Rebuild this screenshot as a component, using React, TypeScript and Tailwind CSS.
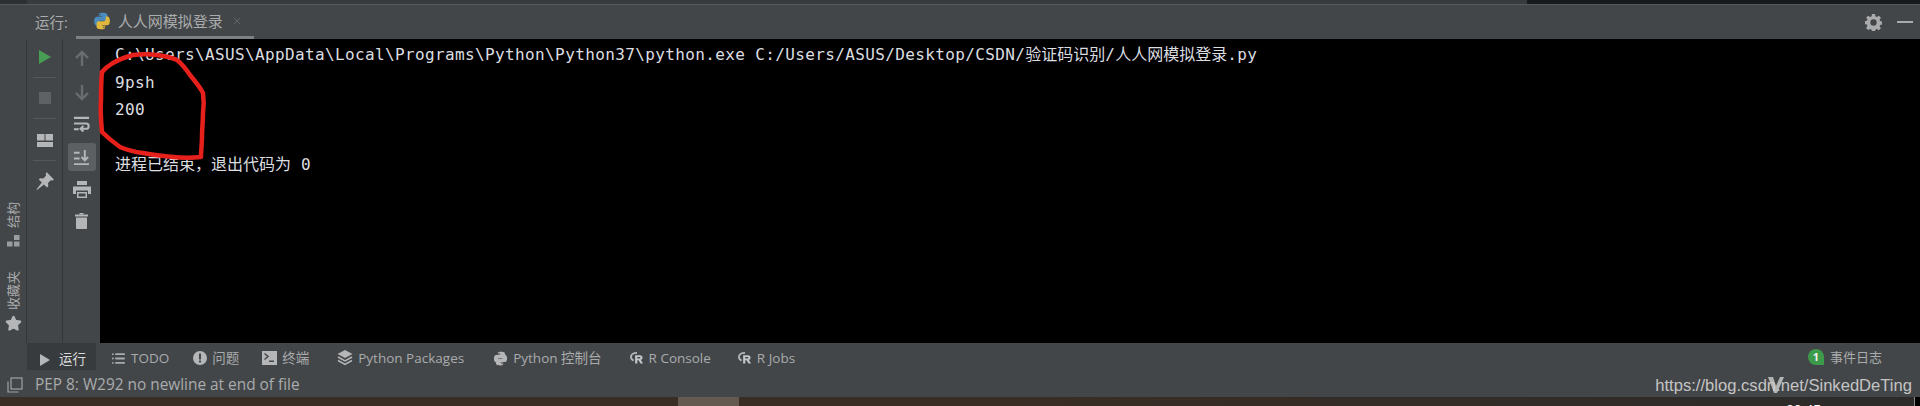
import { X, Star, List } from "lucide-react";

const mono = "font-['DejaVu_Sans_Mono','Noto_Sans_CJK_SC',monospace]";
const ui = "font-['Open_Sans','Noto_Sans_CJK_SC',sans-serif]";

function PythonLogo({ grey, size = 18 }: { grey?: boolean; size?: number }) {
  return (
    <svg width={size} height={size} viewBox="0 0 24 24" className="shrink-0">
      <path
        d="M11.900 1C7.500 1 7.800 3 7.800 3v2.600h4.300v.7H5.600S1.500 5.800 1.500 12.100c0 6.200 3.400 6 3.400 6H7v-3s-.1-3.400 3.400-3.400H16s3.200 0 3.200-3.100V4.100S19.900 1 11.900 1zM9.500 2.800a1 1 0 1 1 0 2 1 1 0 0 1 0-2z"
        fill={grey ? "#b4b6b8" : "#4b8bbe"}
      />
      <path
        d="M12.100 23c4.400 0 4.100-2 4.100-2v-2.600h-4.300v-.7h6.500s4.100.5 4.100-5.800c0-6.200-3.400-6-3.400-6h-2.100v3s.1 3.400-3.400 3.400H8s-3.200 0-3.200 3.100v4.500S4.100 23 12.100 23zm2.400-1.800a1 1 0 1 1 0-2 1 1 0 0 1 0 2z"
        fill={grey ? "#b4b6b8" : "#e0b83e"}
      />
    </svg>
  );
}

function RLogo() {
  return (
    <svg width="14" height="14" viewBox="0 0 15 14">
      <path d="M7.500 1.500C3.500 1.500 1 3.500 1 6c0 1.700 1.100 3 2.800 3.800" fill="none" stroke="#b4b6b8" strokeWidth="2" />
      <path d="M5.500 13V4h5c2 0 3 1 3 2.500S12.500 9 11.500 9l2.500 4h-2.700l-2.200-3.700H7.800V13zM7.800 5.800v1.800h2.400c.6 0 1-.4 1-.9s-.4-.9-1-.9z" fill="#c4c6c8" fillRule="evenodd" />
    </svg>
  );
}

function GearIcon() {
  return (
    <svg width="17" height="17" viewBox="0 0 16 16">
      <path
        fillRule="evenodd"
        fill="#a9abad"
        d="M6.600 0h2.800l.4 2.200 1.300.6L13 1.600 15 3.500l-1.300 1.900.5 1.300 2.300.4v2.800l-2.300.4-.5 1.300 1.300 1.900-2 1.900-1.900-1.200-1.300.6-.4 2.200H6.600l-.4-2.200-1.300-.6L3 15 1 13.100l1.300-1.900-.5-1.300L-.5 9.500V6.700l2.300-.4.5-1.300L1 3.500 3 1.600l1.900 1.200 1.300-.6zM8 5a3 3 0 1 0 0 6 3 3 0 0 0 0-6z"
      />
    </svg>
  );
}

function ArrowIcon({ down }: { down?: boolean }) {
  return (
    <svg width="14" height="16" viewBox="0 0 14 16" fill="none" stroke="#6a6d6f" strokeWidth="2.400" className={down ? "rotate-180" : ""}>
      <path d="M7 16V2M1 8l6-6 6 6" />
    </svg>
  );
}

function SoftWrapIcon() {
  return (
    <svg width="17" height="17" viewBox="0 0 18 18" fill="none" stroke="#b4b6b8" strokeWidth="2.200">
      <path d="M1 2h16M1 8h13c3.500 0 3.500 5.500 0 5.500H9" />
      <path d="M11 10.500 8 13.500l3 3" />
      <path d="M1 14h5" />
    </svg>
  );
}

function ScrollEndIcon() {
  return (
    <svg width="17" height="17" viewBox="0 0 18 18" fill="none" stroke="#b4b6b8" strokeWidth="2">
      <path d="M1 4h6M1 10h6M1 16h16" />
      <path d="M12.500 1v11M9 8.500l3.500 3.500L16 8.500" />
    </svg>
  );
}

function PrinterIcon() {
  return (
    <svg width="18" height="17" viewBox="0 0 18 17" fill="#b4b6b8">
      <rect x="4" y="0" width="10" height="4" />
      <path fillRule="evenodd" d="M0 5.500h18V13h-3V9.500H3V13H0z" />
      <path fillRule="evenodd" d="M4 11h10v6H4zM5.500 12.500v3h7v-3z" />
    </svg>
  );
}

function TrashIcon() {
  return (
    <svg width="13" height="16" viewBox="0 0 13 16" fill="#b4b6b8">
      <rect x="4.500" y="0" width="4" height="1.500" />
      <rect x="0" y="1.500" width="13" height="2" />
      <path d="M1 4.500h11V15a1 1 0 0 1-1 1H2a1 1 0 0 1-1-1z" />
    </svg>
  );
}

function PinIcon() {
  return (
    <svg width="18" height="18" viewBox="0 0 18 18" fill="#b4b6b8">
      <path d="M10.500 0 18 7.500l-2 1.200-1-.7-3 3 .3 3.300-1.300 1.200-3-3L1 18l-.5-.5 5.300-7-3-3L4 6.200l3.300.3 3-3-.7-1z" />
    </svg>
  );
}

function LayoutIcon() {
  return (
    <svg width="16" height="13" viewBox="0 0 16 13" fill="#b4b6b8">
      <rect x="0" y="0" width="7.500" height="6.500" />
      <rect x="8.500" y="0" width="7.500" height="6.500" />
      <rect x="0" y="8" width="16" height="5" />
    </svg>
  );
}

function StructureIcon() {
  return (
    <svg width="13" height="12" viewBox="0 0 13 12" fill="#9a9c9e">
      <rect x="7" y="0" width="5.500" height="5" />
      <rect x="0" y="6.500" width="5.500" height="5" />
      <rect x="7" y="6.500" width="5.500" height="5" />
    </svg>
  );
}

function ProblemIcon() {
  return (
    <svg width="14" height="14" viewBox="0 0 14 14">
      <circle cx="7" cy="7" r="7" fill="#b4b6b8" />
      <rect x="6" y="2.500" width="2" height="6" fill="#45494a" />
      <rect x="6" y="9.500" width="2" height="2" fill="#45494a" />
    </svg>
  );
}

function TerminalIcon() {
  return (
    <svg width="15" height="14" viewBox="0 0 15 14">
      <rect width="15" height="14" fill="#b4b6b8" />
      <path d="M2.500 2.500 6 5.500l-3.500 3" fill="none" stroke="#45494a" strokeWidth="1.500" />
      <rect x="7" y="9.500" width="5" height="1.500" fill="#45494a" />
    </svg>
  );
}

function LayersIcon() {
  return (
    <svg width="16" height="16" viewBox="0 0 16 16">
      <path d="M8 0l7.500 4L8 8 .5 4z" fill="#b4b6b8" />
      <path d="M1 7l7 3.800L15 7M1 10.500l7 3.800 7-3.800" fill="none" stroke="#b4b6b8" strokeWidth="1.500" />
    </svg>
  );
}

function EventBadge() {
  return (
    <svg width="17" height="17" viewBox="0 0 17 17">
      <path d="M8 0a8 8 0 0 1 8 8v8H8A8 8 0 0 1 8 0z" fill="#3c9a4b" />
      <text x="8" y="12" textAnchor="middle" fontSize="11" fontWeight="700" fill="#f0f0f0" fontFamily="Open Sans">1</text>
    </svg>
  );
}

function CopyIcon() {
  return (
    <svg width="16" height="16" viewBox="0 0 16 16" fill="none" stroke="#a0a2a4" strokeWidth="1.200">
      <rect x="4" y="1" width="11" height="11" />
      <path d="M1 4.500V15h10.500" />
    </svg>
  );
}

function RedCircle() {
  return (
    <svg className="absolute left-[90px] top-[45px]" width="125" height="125" viewBox="90 45 125 125" fill="none">
      <path
        d="M102 72C106 67 108 66 113 63C120 59 126 57 133 55C141 54 149 54 157 55C164 56 171 57 177 60C182 64 186 69 190 75C195 81 200 87 203 93C204 100 204 106 203 113C203 121 202 129 202 137C202 144 201 150 201 157C192 158 182 158 173 157C163 156 153 155 143 153C135 152 127 150 120 147C113 142 107 137 102 132C101 121 100 110 101 100C101 90 101 81 102 72Z"
        stroke="#e8201c"
        strokeWidth="4.500"
        strokeLinejoin="round"
      />
    </svg>
  );
}

function Divider({ className }: { className?: string }) {
  return <div className={`h-px w-[23px] bg-[#55585a] ${className ?? ""}`} />;
}

function BottomTab({ icon, label, className }: { icon: React.ReactNode; label: string; className?: string }) {
  return (
    <div className={`flex items-center gap-[5px] pt-[5px] text-[13.500px] text-[#a9abad] ${className ?? ""}`}>
      {icon}
      <span>{label}</span>
    </div>
  );
}

export default function App() {
  return (
    <div className={`relative flex h-[406px] w-[1920px] flex-col overflow-hidden bg-[#434648] ${ui}`}>
      {/* top strip */}
      <div className="flex h-[4px] shrink-0 bg-[#17191b]">
        <div className="h-full w-[27px] bg-[#2d2f31]" />
        <div className="h-full w-[1500px] bg-[#383b3d]" />
      </div>

      {/* run tool window header */}
      <div className="flex h-[35px] shrink-0 border-t border-[#56595b] pl-[35px]">
        <span className="mt-[8px] text-[14.500px] leading-5 text-[#a9abad]">运行:</span>
        <div className="relative ml-[8px] flex h-full w-[178px] items-center pb-[2px] pl-[17px] text-[15px] text-[#a9abad]">
          <PythonLogo />
          <span className="ml-[7px]">人人网模拟登录</span>
          <X size={12} strokeWidth={1.500} className="ml-[8px] text-[#6f7274]" />
          <div className="absolute bottom-0 left-0 h-[3px] w-full bg-[#7e8183]" />
        </div>
        <div className="ml-auto flex items-start pt-[9px]">
          <GearIcon />
          <div className="ml-[15px] mr-[7px] mt-[7px] h-[2px] w-[16px] bg-[#a9abad]" />
        </div>
      </div>

      <div className="flex min-h-0 flex-1">
        {/* left stripe */}
        <div className="flex w-[27px] shrink-0 flex-col items-center border-r border-[#34373a] pt-[163px] text-[13px] leading-4 text-[#a9abad]">
          <span className="rotate-180 [writing-mode:vertical-rl] [text-orientation:sideways]">结构</span>
          <div className="mt-[7px]">
            <StructureIcon />
          </div>
          <span className="mt-[24px] rotate-180 [writing-mode:vertical-rl] [text-orientation:sideways]">收藏夹</span>
          <Star size={17} fill="#b4b6b8" className="mt-[5px] text-[#b4b6b8]" />
        </div>

        {/* run controls */}
        <div className="flex w-[36px] shrink-0 flex-col items-center border-r border-[#34373a] pt-[11px]">
          <svg width="12" height="14" viewBox="0 0 12 14" fill="#499c54">
            <path d="M0 0l12 7-12 7z" />
          </svg>
          <Divider className="mt-[13px]" />
          <div className="mt-[14px] h-[12px] w-[12px] bg-[#5f6264]" />
          <Divider className="mt-[14px]" />
          <div className="mt-[15px]"><LayoutIcon /></div>
          <Divider className="mt-[13px]" />
          <div className="mt-[11px]"><PinIcon /></div>
        </div>

        {/* console actions */}
        <div className="flex w-[37px] shrink-0 flex-col items-center pt-[11px]">
          <ArrowIcon />
          <div className="mt-[19px]"><ArrowIcon down /></div>
          <div className="mt-[15px]"><SoftWrapIcon /></div>
          <div className="mt-[10px] flex h-[28px] w-[28px] items-center justify-center rounded-[3px] bg-[#5c6062]">
            <ScrollEndIcon />
          </div>
          <div className="mt-[10px]"><PrinterIcon /></div>
          <div className="mt-[15px]"><TrashIcon /></div>
        </div>

        {/* console output */}
        <div className={`min-w-0 flex-1 bg-black pl-[15px] pt-[2px] text-[16px] leading-[27.500px] tracking-[0.370px] text-[#dcdee0] ${mono}`}>
          <div>
            {"C:\\Users\\ASUS\\AppData\\Local\\Programs\\Python\\Python37\\python.exe C:/Users/ASUS/Desktop/CSDN/"}
            <span className="tracking-normal">验证码识别</span>/<span className="tracking-normal">人人网模拟登录</span>.py
          </div>
          <div>9psh</div>
          <div>200</div>
          <div>&nbsp;</div>
          <div>
            <span className="tracking-normal">进程已结束，退出代码为</span> 0
          </div>
        </div>
      </div>

      {/* bottom tool bar */}
      <div className="flex h-[29px] shrink-0 items-start">
        <div className="ml-[27px] flex h-[27px] w-[69px] items-center gap-[9px] bg-[#383b3d] pt-[6px] pl-[13px] text-[13.500px] text-[#d8dadc]">
          <svg width="10" height="12" viewBox="0 0 10 12" fill="#b4b6b8">
            <path d="M0 0l10 6-10 6z" />
          </svg>
          <span>运行</span>
        </div>
        <BottomTab className="ml-[15px]" icon={<List size={15} strokeWidth={3} />} label="TODO" />
        <BottomTab className="ml-[24px]" icon={<ProblemIcon />} label="问题" />
        <BottomTab className="ml-[23px]" icon={<TerminalIcon />} label="终端" />
        <BottomTab className="ml-[28px]" icon={<LayersIcon />} label="Python Packages" />
        <BottomTab className="ml-[29px]" icon={<PythonLogo grey size={15} />} label="Python 控制台" />
        <BottomTab className="ml-[28px]" icon={<RLogo />} label="R Console" />
        <BottomTab className="ml-[27px]" icon={<RLogo />} label="R Jobs" />
        <div className="ml-auto mr-[38px] flex items-center gap-[5px] pt-[5px] text-[13px] text-[#a9abad]">
          <EventBadge />
          <span>事件日志</span>
        </div>
      </div>

      {/* status bar */}
      <div className="flex h-[25px] shrink-0 items-center gap-[12px] pl-[7px] pt-[1px] text-[15.400px] text-[#a9abad]">
        <CopyIcon />
        <span>PEP 8: W292 no newline at end of file</span>
      </div>

      {/* desktop behind the window */}
      <div className="relative flex h-[9px] shrink-0 overflow-hidden bg-gradient-to-r from-[#3a2d24] via-[#3a2d24] to-[#2c2b2a]">
        <div className="ml-[678px] h-full w-[61px] bg-[#655a50]" />
        <span className="absolute left-[1786px] top-[5px] font-['Liberation_Sans',sans-serif] text-[14px] leading-4 text-white">20:45</span>
        <div className="ml-auto h-full w-[6px] border-l border-[#8a8a8a] bg-black" />
      </div>

      <RedCircle />

      {/* blog watermark */}
      <div className="absolute bottom-[11px] right-[8px] font-['Liberation_Sans',sans-serif] text-[16.600px] leading-none text-[#c4c4c4]">
        https://blog.csdn.net/SinkedDeTing
      </div>
      <svg className="absolute left-[1768px] top-[377px]" width="16" height="16" viewBox="0 0 16 16" fill="#d0d0d0" opacity="0.8">
        <path d="M0 0h5l3 9 4-9h4L9 16H6z" />
      </svg>
    </div>
  );
}
